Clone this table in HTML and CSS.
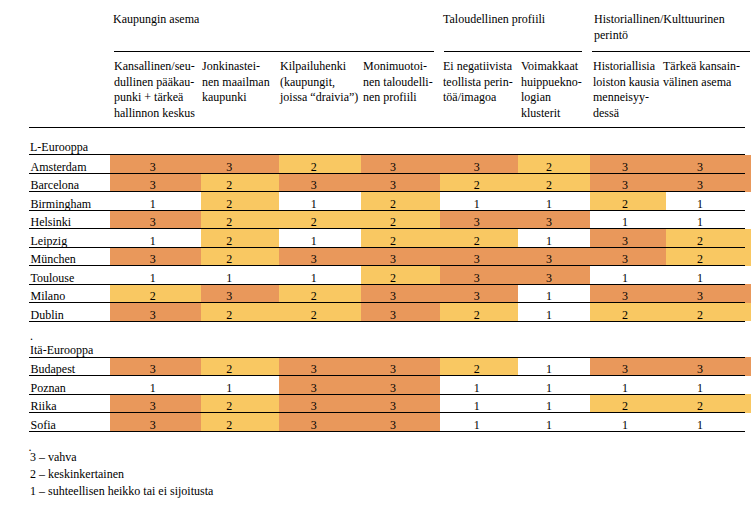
FILE: index.html
```html
<!DOCTYPE html>
<html lang="fi">
<head>
<meta charset="utf-8">
<title>Kaupunkien profiilit</title>
<link rel="stylesheet" href="styles.css">
</head>
<body>
<table class="grid">
  <colgroup>
    <col class="w0"><col class="w1"><col class="w2"><col class="w3"><col class="w4"><col class="w5"><col class="w6"><col class="w7"><col class="w8">
  </colgroup>
  <thead>
    <tr class="groups">
      <th></th>
      <th colspan="4"><div class="grp g1">Kaupungin asema</div></th>
      <th colspan="2"><div class="grp g2">Taloudellinen profiili</div></th>
      <th colspan="2"><div class="grp g3">Historiallinen/Kulttuurinen<br>perintö</div></th>
    </tr>
    <tr class="cols">
      <th></th>
      <th>Kansallinen/seu-<br>dullinen pääkau-<br>punki + tärkeä<br>hallinnon keskus</th>
      <th>Jonkinastei-<br>nen maailman<br>kaupunki</th>
      <th>Kilpailuhenki<br>(kaupungit,<br>joissa “draivia”)</th>
      <th>Monimuotoi-<br>nen taloudelli-<br>nen profiili</th>
      <th>Ei negatiivista<br>teollista perin-<br>töä/imagoa</th>
      <th>Voimakkaat<br>huippuekno-<br>logian<br>klusterit</th>
      <th>Historiallisia<br>loiston kausia<br>menneisyy-<br>dessä</th>
      <th><span class="shift">Tärkeä kansain-<br>välinen asema</span></th>
    </tr>
  </thead>
  <tbody>
    <tr class="section first"><td colspan="9">L-Eurooppa</td></tr>
    <tr class="data"><th>Amsterdam</th><td class="v3">3</td><td class="v3">3</td><td class="v2">2</td><td class="v3">3</td><td class="v3">3</td><td class="v2">2</td><td class="v3">3</td><td class="v3">3</td></tr>
    <tr class="data"><th>Barcelona</th><td class="v3">3</td><td class="v2">2</td><td class="v3">3</td><td class="v3">3</td><td class="v2">2</td><td class="v2">2</td><td class="v3">3</td><td class="v3">3</td></tr>
    <tr class="data"><th>Birmingham</th><td class="v1">1</td><td class="v2">2</td><td class="v1">1</td><td class="v2">2</td><td class="v1">1</td><td class="v1">1</td><td class="v2">2</td><td class="v1">1</td></tr>
    <tr class="data"><th>Helsinki</th><td class="v3">3</td><td class="v2">2</td><td class="v2">2</td><td class="v2">2</td><td class="v3">3</td><td class="v3">3</td><td class="v1">1</td><td class="v1">1</td></tr>
    <tr class="data"><th>Leipzig</th><td class="v1">1</td><td class="v2">2</td><td class="v1">1</td><td class="v2">2</td><td class="v2">2</td><td class="v1">1</td><td class="v3">3</td><td class="v2">2</td></tr>
    <tr class="data"><th>München</th><td class="v3">3</td><td class="v2">2</td><td class="v3">3</td><td class="v3">3</td><td class="v3">3</td><td class="v3">3</td><td class="v3">3</td><td class="v2">2</td></tr>
    <tr class="data"><th>Toulouse</th><td class="v1">1</td><td class="v1">1</td><td class="v1">1</td><td class="v2">2</td><td class="v3">3</td><td class="v3">3</td><td class="v1">1</td><td class="v1">1</td></tr>
    <tr class="data"><th>Milano</th><td class="v2">2</td><td class="v3">3</td><td class="v2">2</td><td class="v3">3</td><td class="v3">3</td><td class="v1">1</td><td class="v3">3</td><td class="v3">3</td></tr>
    <tr class="data"><th>Dublin</th><td class="v3">3</td><td class="v2">2</td><td class="v2">2</td><td class="v3">3</td><td class="v2">2</td><td class="v1">1</td><td class="v2">2</td><td class="v2">2</td></tr>
    <tr class="section second"><td colspan="9">.<br>Itä-Eurooppa</td></tr>
    <tr class="data"><th>Budapest</th><td class="v3">3</td><td class="v2">2</td><td class="v3">3</td><td class="v3">3</td><td class="v2">2</td><td class="v1">1</td><td class="v3">3</td><td class="v3">3</td></tr>
    <tr class="data"><th>Poznan</th><td class="v1">1</td><td class="v1">1</td><td class="v3">3</td><td class="v3">3</td><td class="v1">1</td><td class="v1">1</td><td class="v1">1</td><td class="v1">1</td></tr>
    <tr class="data"><th>Riika</th><td class="v3">3</td><td class="v2">2</td><td class="v3">3</td><td class="v3">3</td><td class="v1">1</td><td class="v1">1</td><td class="v2">2</td><td class="v2">2</td></tr>
    <tr class="data"><th>Sofia</th><td class="v3">3</td><td class="v2">2</td><td class="v3">3</td><td class="v3">3</td><td class="v1">1</td><td class="v1">1</td><td class="v1">1</td><td class="v1">1</td></tr>
  </tbody>
</table>
<div class="dot">.</div>
<div class="legend">
  <p>3 – vahva</p>
  <p>2 – keskinkertainen</p>
  <p>1 – suhteellisen heikko tai ei sijoitusta</p>
</div>
</body>
</html>
```
FILE: styles.css
```css
html, body {
  margin: 0;
  padding: 0;
  background: #fff;
}
body {
  font-family: "Liberation Serif", "Tinos", "Times New Roman", "Nimbus Roman", "DejaVu Serif", serif;
  font-size: 12px;
  color: #000;
}
.grid {
  margin-left: 29px;
  width: 716px;
  border-collapse: collapse;
  table-layout: fixed;
}
.w0 { width: 81px; }
.w1 { width: 91px; }
.w2 { width: 78px; }
.w3 { width: 82px; }
.w4 { width: 79px; }
.w5 { width: 78px; }
.w6 { width: 72px; }
.w7 { width: 76px; }
.w8 { width: 79px; }

.grid th, .grid td {
  padding: 0;
  font-weight: normal;
  text-align: left;
  white-space: nowrap;
  color: #000;
  font-family: "Liberation Serif", "Tinos", "Times New Roman", "Nimbus Roman", "DejaVu Serif", serif;
}

/* group headers */
.groups th { vertical-align: top; }
.grp {
  height: 39px;
  padding-top: 12px;
  line-height: 15.5px;
  border-bottom: 1px solid #000;
}
.g1 { margin: 0 6px 0 4px; text-indent: -1px; }
.g2 { margin: 0 8px 0 4px; text-indent: -1px; }
.g3 { margin: 0 -5px 0 2px; padding-left: 2px; }

/* column headers */
.cols th {
  vertical-align: top;
  line-height: 15.5px;
  padding-top: 7px;
  padding-bottom: 6px;
  border-bottom: 1px solid #000;
}
.cols th:nth-child(2) { padding-left: 4px; }
.cols th:nth-child(3) { padding-left: 1px; }
.cols th:nth-child(4) { padding-left: 1px; }
.cols th:nth-child(5) { padding-left: 2px; }
.cols th:nth-child(6) { padding-left: 3px; }
.cols th:nth-child(7) { padding-left: 3px; }
.cols th:nth-child(8) { padding-left: 3px; }
.shift { display: block; margin-left: -3px; }

/* section rows */
.section td {
  vertical-align: bottom;
  line-height: 14px;
  padding-left: 1px;
  border-bottom: 1px solid #000;
}
.section.first td { height: 26px; }
.section.second td { height: 35px; }

/* data rows */
.data th, .data td {
  height: 17.5px;
  vertical-align: bottom;
  line-height: 11px;
  border-bottom: 1px solid #000;
}
.data th { padding-left: 1.5px; }
.data td:nth-child(2) { padding-left: 39.7px; }
.data td:nth-child(3) { padding-left: 25.3px; }
.data td:nth-child(4) { padding-left: 31.7px; }
.data td:nth-child(5) { padding-left: 29px; }
.data td:nth-child(6) { padding-left: 33.7px; }
.data td:nth-child(7) { padding-left: 28px; }
.data td:nth-child(8) { padding-left: 32px; }
.data td:nth-child(9) { padding-left: 31px; }

.v3 { background: #e9985b; }
.v2 { background: #f9c862; }
.v1 { background: #fff; }
.data td.v3:last-child { box-shadow: 6px 0 0 #e9985b; }
.data td.v2:last-child { box-shadow: 6px 0 0 #f9c862; }

/* legend */
.dot {
  margin: 15px 0 0 28.5px;
  height: 0;
  line-height: 0;
}
.legend {
  margin: 2px 0 0 30px;
}
.legend p {
  margin: 0;
  line-height: 17px;
}
```
